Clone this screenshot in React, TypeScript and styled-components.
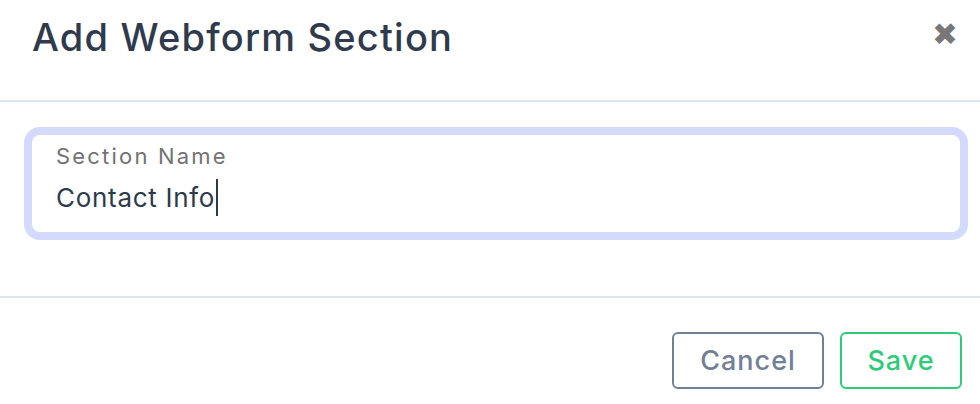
import React from 'react';
import styled, { createGlobalStyle } from 'styled-components';

const GlobalStyle = createGlobalStyle`
  html, body {
    margin: 0;
    padding: 0;
    background: #ffffff;
  }
  body {
    font-family: Inter, 'Noto Sans', sans-serif;
  }
`;

const Modal = styled.div`
  width: 980px;
  height: 404px;
  display: flex;
  flex-direction: column;
  background: #ffffff;
`;

const Header = styled.div`
  height: 102px;
  box-sizing: border-box;
  padding: 0 22px 0 32px;
  display: flex;
  align-items: flex-start;
  justify-content: space-between;
  border-bottom: 2px solid #dde6ef;
`;

const Title = styled.h2`
  margin: 14px 0 0;
  font-size: 38px;
  font-weight: 500;
  letter-spacing: 1.2px;
  color: #2f3b4c;
`;

const CloseButton = styled.button`
  margin-top: 19px;
  border: none;
  background: none;
  padding: 0;
  color: #777777;
  font-size: 31px;
  line-height: 1;
  cursor: pointer;
`;

const Body = styled.div`
  padding: 33px 20px 64px 32px;
  border-bottom: 2px solid #dde6ef;
`;

const Field = styled.label`
  display: flex;
  flex-direction: column;
  height: 97px;
  box-sizing: border-box;
  padding: 7px 24px 0;
  border-radius: 8px;
  background: #ffffff;
  box-shadow: 0 0 0 8px #d3dafb;
`;

const FieldLabel = styled.span`
  font-size: 22px;
  line-height: 28px;
  font-weight: 400;
  color: #727272;
  letter-spacing: 2.2px;
`;

const FieldValue = styled.div`
  display: flex;
  align-items: center;
  margin-top: 8px;
  height: 38px;
  font-size: 26px;
  color: #2d3a4b;
  letter-spacing: 0.7px;
`;

const Caret = styled.span`
  width: 2px;
  height: 37px;
  margin-left: 1px;
  background: #2d3a4b;
`;

const Footer = styled.div`
  flex: 1;
  display: flex;
  justify-content: flex-end;
  align-items: flex-start;
  gap: 16px;
  padding: 34px 18px 0 0;
`;

const Button = styled.button<{ $tone: 'muted' | 'success' }>`
  height: 57px;
  box-sizing: border-box;
  padding: 0 20px;
  min-width: ${p => (p.$tone === 'muted' ? '152px' : '122px')};
  border-radius: 6px;
  background: #ffffff;
  font-family: inherit;
  font-size: 27px;
  font-weight: 500;
  letter-spacing: 1px;
  cursor: pointer;
  border: 2px solid ${p => (p.$tone === 'muted' ? '#718096' : '#2ecc7a')};
  color: ${p => (p.$tone === 'muted' ? '#718096' : '#2ecc7a')};
`;

export default function App() {
  return (
    <>
      <GlobalStyle />
      <Modal>
        <Header>
          <Title>Add Webform Section</Title>
          <CloseButton aria-label="Close">✖</CloseButton>
        </Header>
        <Body>
          <Field>
            <FieldLabel>Section Name</FieldLabel>
            <FieldValue>
              Contact Info
              <Caret />
            </FieldValue>
          </Field>
        </Body>
        <Footer>
          <Button $tone="muted">Cancel</Button>
          <Button $tone="success">Save</Button>
        </Footer>
      </Modal>
    </>
  );
}
